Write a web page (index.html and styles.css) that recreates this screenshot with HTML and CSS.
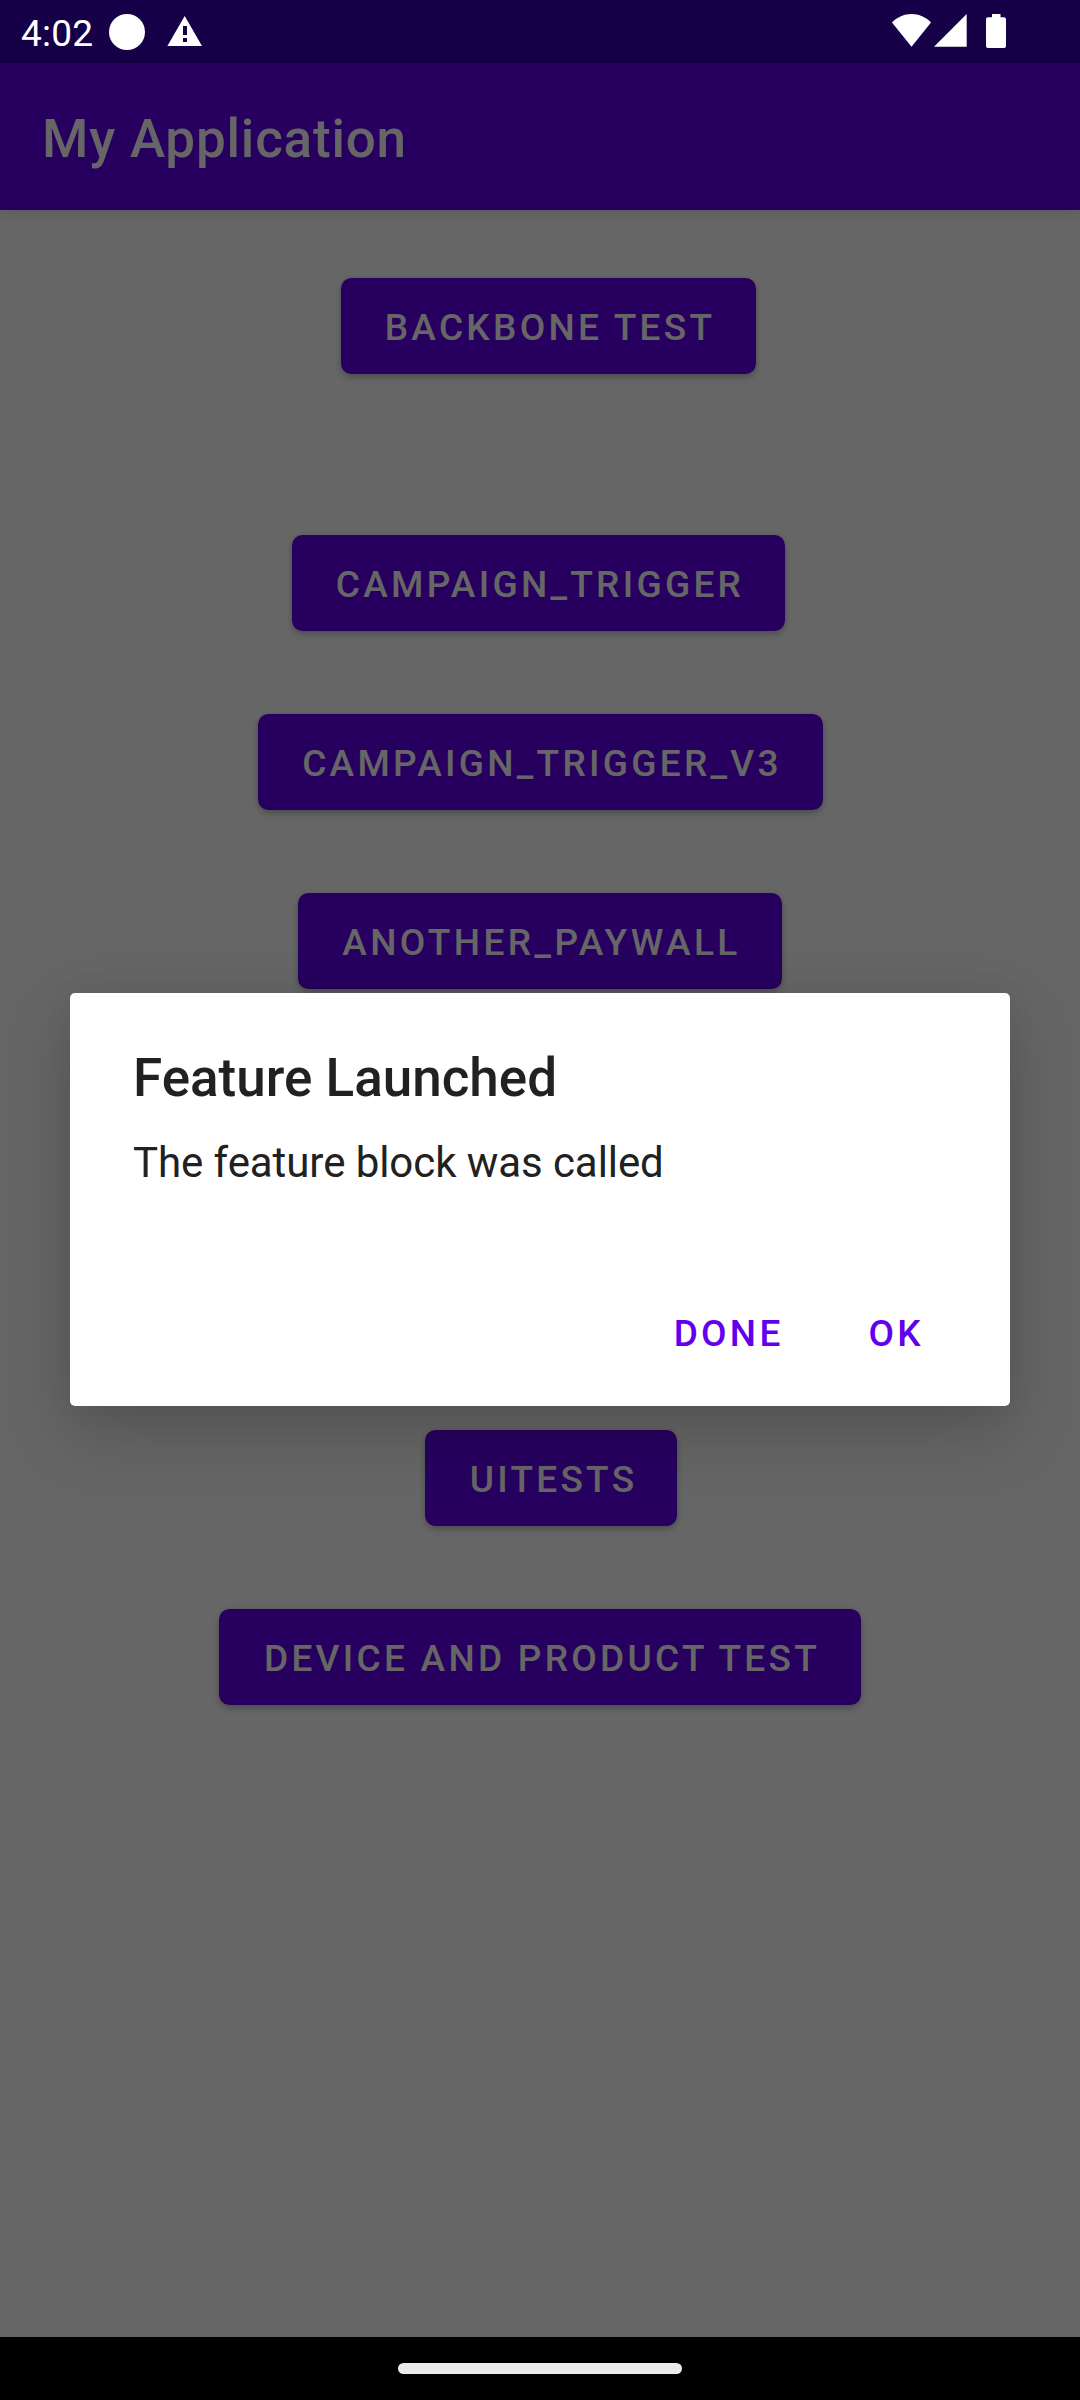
FILE: index.html
```html
<!DOCTYPE html>
<html lang="en">
<head>
<meta charset="utf-8">
<title>My Application</title>
<link rel="stylesheet" href="styles.css">
</head>
<body>
<div class="screen">
  <header class="status-bar">
    <div class="status-left">
      <span class="clock">4:02</span>
      <svg class="icon-dot" viewBox="0 0 36 36"><circle cx="18" cy="18" r="18"/></svg>
      <svg class="icon-warning" viewBox="0 0 36 32"><path fill-rule="evenodd" d="M17.700 1 35 31H.4zM16 11v9h4v-9zM16 23v4h4v-4z"/></svg>
    </div>
    <div class="status-right">
      <svg class="icon-wifi" viewBox="0 0 39 33"><path d="M19.500 0C12 0 5.300 3 0 8.500L19.500 32.700 39 8.500C33.700 3 27 0 19.500 0z"/></svg>
      <svg class="icon-signal" viewBox="0 0 33 33"><path d="M32.700 0V32.700H0z"/></svg>
      <svg class="icon-battery" viewBox="0 0 20 34"><path d="M6 0h8.500v3.300H18a2 2 0 0 1 2 2V32a2 2 0 0 1-2 2H2a2 2 0 0 1-2-2V5.300a2 2 0 0 1 2-2h4z"/></svg>
    </div>
  </header>
  <div class="app-bar"><h1 class="app-title">My Application</h1></div>
  <main class="content">
    <button class="btn btn-backbone">BACKBONE TEST</button>
    <button class="btn btn-trigger">CAMPAIGN_TRIGGER</button>
    <button class="btn btn-trigger-v3">CAMPAIGN_TRIGGER_V3</button>
    <button class="btn btn-paywall">ANOTHER_PAYWALL</button>
    <button class="btn btn-uitests">UITESTS</button>
    <button class="btn btn-device">DEVICE AND PRODUCT TEST</button>
  </main>
  <footer class="nav-bar"><div class="nav-pill"></div></footer>
  <div class="scrim">
    <section class="dialog" role="dialog">
      <h2 class="dialog-title">Feature Launched</h2>
      <p class="dialog-text">The feature block was called</p>
      <div class="dialog-actions">
        <button class="text-btn">DONE</button>
        <button class="text-btn">OK</button>
      </div>
    </section>
  </div>
</div>
</body>
</html>
```
FILE: styles.css
```css
* { box-sizing: border-box; }

body {
  margin: 0;
  font-family: Roboto, sans-serif;
}

h1, h2, p { margin: 0; font-weight: 400; }

button {
  border: 0;
  font-family: inherit;
  font-size: 37px;
  font-weight: 500;
  letter-spacing: 3.28px;
  line-height: 43px;
  white-space: nowrap;
}

.screen {
  position: relative;
  display: flex;
  flex-direction: column;
  width: 1080px;
  height: 2400px;
  overflow: hidden;
  background: #fff;
}

.status-bar {
  display: flex;
  justify-content: space-between;
  height: 63px;
  background: #3700b3;
}

.status-left, .status-right {
  position: relative;
  z-index: 2;
  display: flex;
  align-items: flex-start;
  fill: #fff;
  color: #fff;
}

.status-left { padding-left: 21px; }
.status-right { padding: 14px 74px 0 0; }

.clock {
  width: 88px;
  padding-top: 12px;
  font-size: 37px;
  letter-spacing: .2px;
  line-height: 43px;
}

.icon-dot { width: 36px; height: 36px; margin-top: 14px; }
.icon-warning { width: 36px; height: 32px; margin: 15px 0 0 22px; }
.icon-wifi { width: 39px; height: 33px; }
.icon-signal { width: 33px; height: 33px; margin-left: 3px; }
.icon-battery { width: 20px; height: 34px; margin-left: 19px; }

.app-bar {
  position: relative;
  height: 147px;
  padding: 45px 42px 0;
  background: #6200ee;
  box-shadow: 0 4px 14px rgba(0, 0, 0, .1);
}

.app-title {
  font-size: 53px;
  font-weight: 500;
  letter-spacing: .8px;
  line-height: 62px;
  color: #fff;
}

.content {
  flex: 1;
  display: flex;
  flex-direction: column;
  align-items: center;
  gap: 83px;
  padding-top: 68px;
}

.btn {
  flex: none;
  height: 96px;
  padding: 2px 0 0 3px;
  border-radius: 10.5px;
  background: #6200ee;
  color: #fff;
  box-shadow: 0 4px 7px rgba(0, 0, 0, .2), 0 0 5px rgba(0, 0, 0, .1);
}

.btn-backbone { width: 415px; margin: 0 0 78px 17px; }
.btn-trigger { width: 493px; margin-right: 3px; }
.btn-trigger-v3 { width: 565px; margin-left: 1px; }
.btn-paywall { width: 484px; margin-bottom: 358px; letter-spacing: 3.4px; }
.btn-uitests { width: 252px; margin-left: 22px; padding-left: 5px; }
.btn-device { width: 642px; padding-left: 4px; }

.nav-bar {
  display: flex;
  justify-content: center;
  height: 63px;
  padding-top: 26px;
  background: #000;
}

.nav-pill {
  position: relative;
  z-index: 2;
  width: 284px;
  height: 11px;
  border-radius: 6px;
  background: #ebebeb;
}

.scrim {
  position: absolute;
  inset: 0;
  z-index: 1;
  padding: 993px 70px 0;
  background: rgba(0, 0, 0, .6);
}

.dialog {
  display: flex;
  flex-direction: column;
  height: 413px;
  padding: 54px 63px 20px;
  border-radius: 5px;
  background: #fff;
  color: #212121;
  box-shadow: 0 26px 70px rgba(0, 0, 0, .19), 0 0 30px rgba(0, 0, 0, .05);
}

.dialog-title {
  font-size: 53px;
  font-weight: 500;
  line-height: 62px;
}

.dialog-text {
  margin-top: 29px;
  font-size: 42px;
  letter-spacing: -.07px;
  line-height: 50px;
}

.dialog-actions {
  display: flex;
  justify-content: flex-end;
  gap: 39px;
  margin-top: auto;
}

.text-btn {
  height: 106px;
  padding: 0 23px;
  background: none;
  color: #6200ee;
}
```
